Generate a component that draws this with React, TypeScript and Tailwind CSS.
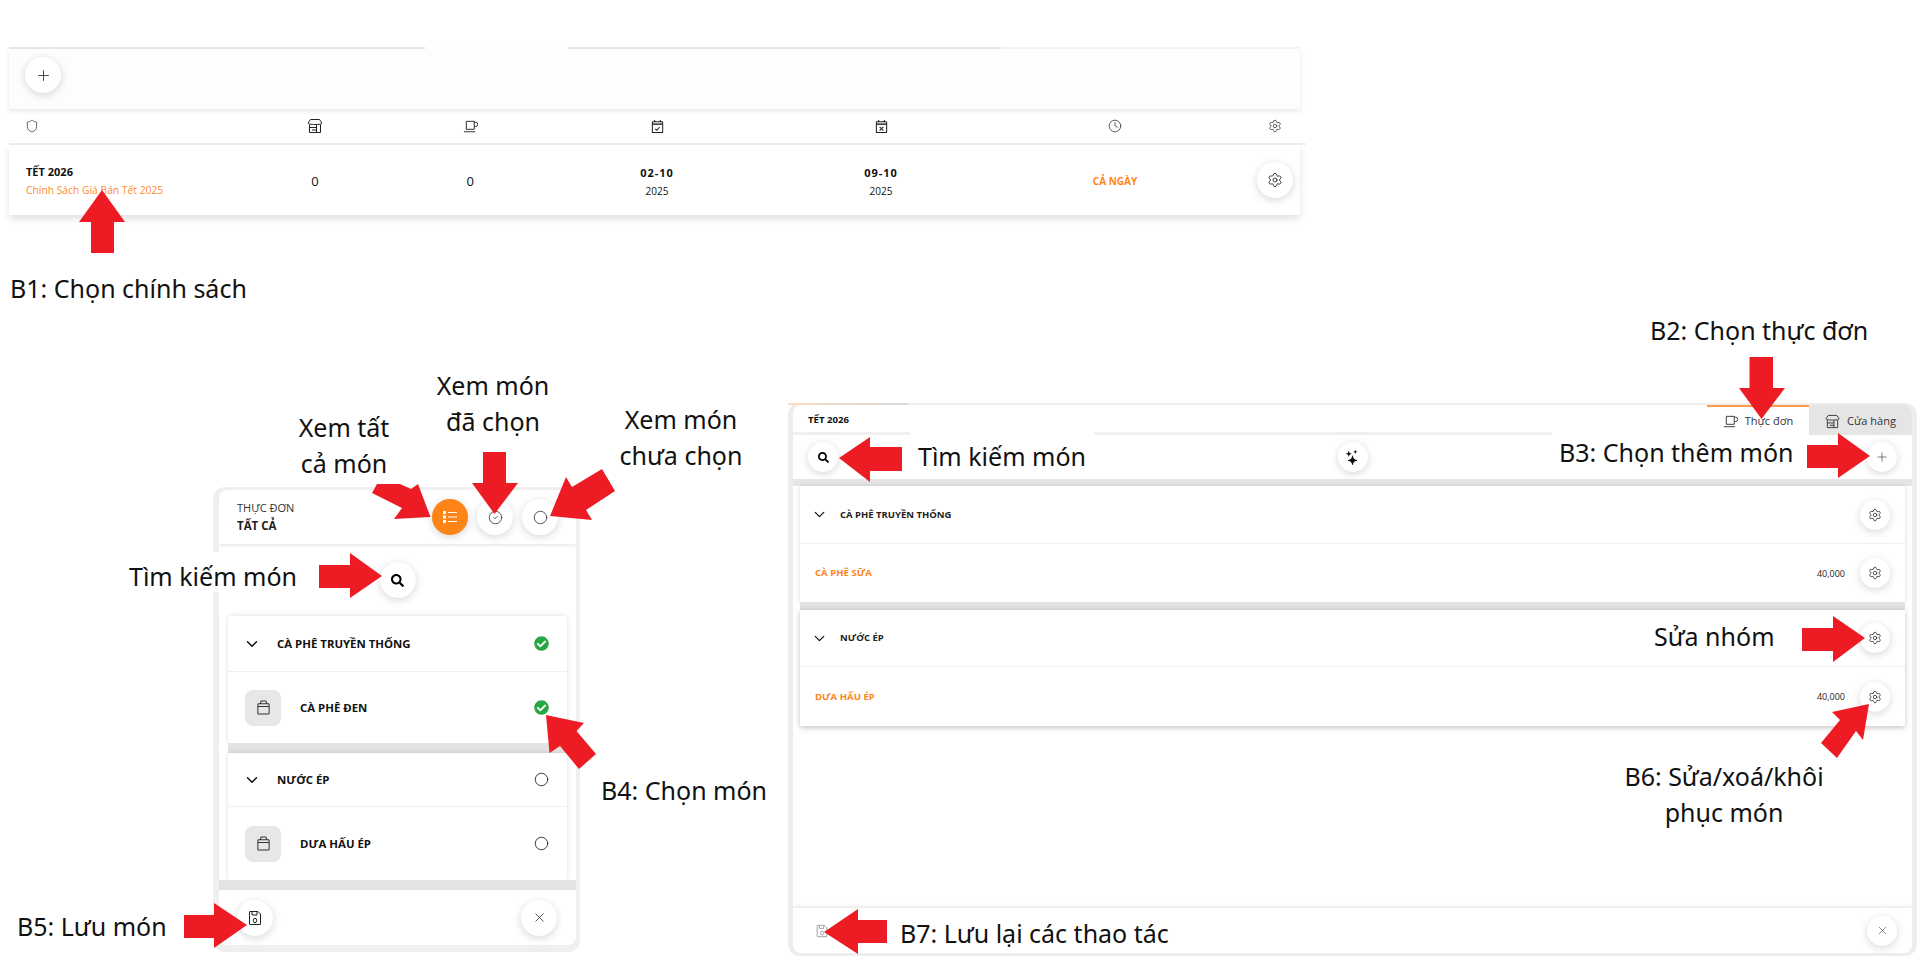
import type { ReactNode } from 'react';
import { ChevronDown, Circle, CircleCheck, Clock, Plus, Settings, Shield, X } from 'lucide-react';
import { BsStars } from 'react-icons/bs';
import { FaCheckCircle, FaSearch } from 'react-icons/fa';

function RoundBtn({ size = 'md', active, children }: { size?: 'sm' | 'md'; active?: boolean; children: ReactNode }) {
  return (
    <div
      className={`flex items-center justify-center rounded-full shadow-[0_2px_8px_rgba(0,0,0,0.16)] ${
        size === 'sm' ? 'h-[30px] w-[30px]' : 'h-[36px] w-[36px]'
      } ${active ? 'bg-[#ff8418] text-white' : 'bg-white text-[#222]'}`}
    >
      {children}
    </div>
  );
}

function StoreIcon({ className }: { className?: string }) {
  return (
    <svg className={className} viewBox="0 0 16 16" fill="none" stroke="currentColor" strokeWidth="1">
      <path d="M3.500 1.500h9l2.500 3.500c0 1-3 1.500-7 1.500S1 6 1 5z" />
      <path d="M2.500 6.500v8h11v-8M2.500 9.500h7M9.500 6.500v8M5 12h4.500" />
    </svg>
  );
}

function CupIcon({ className }: { className?: string }) {
  return (
    <svg className={className} viewBox="0 0 16 16" fill="none" stroke="currentColor" strokeWidth="1">
      <path d="M3.500 2.500h8.500v8.500H3.500zM12 3.500h1.500a1.500 1.500 0 0 1 0 4.500H12" />
      <path d="M1 13.500h12" strokeWidth="1.400" stroke="#666" />
    </svg>
  );
}

function CalendarIcon({ mark }: { mark: 'check' | 'x' }) {
  return (
    <svg className="h-[15px] w-[15px] text-[#222]" viewBox="0 0 16 16" fill="none" stroke="currentColor" strokeWidth="1.100">
      <rect x="2.500" y="3" width="11" height="11.500" rx="0.500" />
      <path d="M2.500 5.500h11" strokeWidth="1.500" />
      <path d="M5 1v2.500M11 1v2.500" />
      {mark === 'check' ? <path d="M5.500 10.500l1.800 1.500 3-3.500" /> : <path d="M6 8.500l4 4M10 8.500l-4 4" />}
    </svg>
  );
}

function ListIcon() {
  return (
    <svg className="h-[16px] w-[16px]" viewBox="0 0 16 16" fill="white">
      <rect x="1" y="2" width="3" height="3" />
      <rect x="1" y="6.500" width="3" height="3" />
      <rect x="1" y="11" width="3" height="3" />
      <rect x="6" y="3" width="9" height="1" />
      <rect x="6" y="7.500" width="9" height="1" />
      <rect x="6" y="12" width="9" height="1" />
    </svg>
  );
}

function SaveIcon({ className }: { className?: string }) {
  return (
    <svg className={className} viewBox="0 0 16 16" fill="none" stroke="currentColor" strokeWidth="1">
      <path d="M3 1.500h8l2.500 2.500v10.500H3a.5.5 0 0 1-.5-.5V2a.5.5 0 0 1 .5-.5z" />
      <path d="M5 1.500v3.500h5V1.500" />
      <ellipse cx="8" cy="10.500" rx="1.700" ry="2.200" />
    </svg>
  );
}

function BoxThumb() {
  return (
    <div className="flex h-[36px] w-[36px] shrink-0 items-center justify-center rounded-lg bg-[#e7e7e7]">
      <svg className="h-[15px] w-[15px] text-[#333]" viewBox="0 0 16 16" fill="none" stroke="currentColor" strokeWidth="1.100">
        <rect x="2" y="4" width="12" height="11" rx="1" />
        <path d="M2 7h12M4.500 4l1-3h5l1 3" />
      </svg>
    </div>
  );
}

function PickGroup({ title, item, picked, itemHeight, titleHeight }: { title: string; item: string; picked?: boolean; itemHeight: string; titleHeight: string }) {
  const mark = picked ? (
    <FaCheckCircle className="h-[15px] w-[15px] text-[#27a844]" />
  ) : (
    <Circle className="h-[15px] w-[15px] text-[#222]" strokeWidth={1.4} />
  );
  return (
    <div className="rounded-[3px] bg-white shadow-[0_0_5px_rgba(0,0,0,0.14)]">
      <div className={`flex items-center justify-between border-b border-[#efefef] pl-[15px] pr-[18px] ${titleHeight}`}>
        <div className="flex items-center gap-[16px]">
          <ChevronDown className="h-[18px] w-[18px] text-[#111]" strokeWidth={2} />
          <span className="text-[11.400px] font-bold text-[#111]">{title}</span>
        </div>
        {mark}
      </div>
      <div className={`flex items-center justify-between pl-[17px] pr-[18px] ${itemHeight}`}>
        <div className="flex items-center gap-[19px]">
          <BoxThumb />
          <span className="text-[11.400px] font-bold text-[#111]">{item}</span>
        </div>
        {mark}
      </div>
    </div>
  );
}

function MenuGroup({ title, item, titleHeight, itemHeight }: { title: string; item: string; titleHeight: string; itemHeight: string }) {
  return (
    <div className="bg-white shadow-[0_0_5px_rgba(0,0,0,0.14)]">
      <div className={`flex items-center justify-between border-b border-[#f0f0f0] pl-[11px] pr-[15px] ${titleHeight}`}>
        <div className="flex items-center gap-[12px]">
          <ChevronDown className="h-[17px] w-[17px] text-[#111]" strokeWidth={1.800} />
          <span className="pt-[1px] text-[9.500px] font-bold text-[#222]">{title}</span>
        </div>
        <RoundBtn size="sm">
          <Settings className="h-[14px] w-[14px]" strokeWidth={1.300} />
        </RoundBtn>
      </div>
      <div className={`flex items-center justify-between pl-[15px] pr-[15px] ${itemHeight}`}>
        <span className="pt-[1px] text-[9.600px] font-bold text-[#ff8418]">{item}</span>
        <div className="flex items-center gap-[15px]">
          <span className="pt-[1px] text-[9px] text-[#222]">40,000</span>
          <RoundBtn size="sm">
            <Settings className="h-[14px] w-[14px]" strokeWidth={1.300} />
          </RoundBtn>
        </div>
      </div>
    </div>
  );
}

function PolicyPanel() {
  const cols = 'grid grid-cols-[228.5px_155px_155.5px_218px_230px_238px_66px] items-center';
  return (
    <div className="absolute left-[9px] top-[47px] w-[1291px] text-[#111]">
      <div className="flex h-[2px]">
        <div className="w-[416px] bg-[#e6e6e6]" />
        <div className="w-[143px] bg-white" />
        <div className="w-[433px] bg-[#e6e6e6]" />
        <div className="flex-1 bg-[#f3f3f3]" />
      </div>
      <div className="flex h-[60px] items-center bg-[#fdfdfd] pb-[8px] pl-[16px] shadow-[0_2px_5px_rgba(0,0,0,0.1)]">
        <RoundBtn>
          <Plus className="h-[17px] w-[17px] text-[#3a2a30]" strokeWidth={1.200} />
        </RoundBtn>
      </div>
      <div className={`${cols} h-[36px] w-[1297px] border-b-2 border-[#eeeeee]`}>
        <div className="pl-[16px]">
          <Shield className="h-[14px] w-[14px] text-[#333]" strokeWidth={1.300} />
        </div>
        <div className="flex justify-center">
          <StoreIcon className="h-[16px] w-[16px] text-[#222]" />
        </div>
        <div className="flex justify-center">
          <CupIcon className="h-[15px] w-[15px] text-[#222]" />
        </div>
        <div className="flex justify-center">
          <CalendarIcon mark="check" />
        </div>
        <div className="flex justify-center">
          <CalendarIcon mark="x" />
        </div>
        <div className="flex justify-center">
          <Clock className="h-[14px] w-[14px] text-[#333]" strokeWidth={1.300} />
        </div>
        <div className="flex justify-end pr-[18px]">
          <Settings className="h-[14px] w-[14px] text-[#333]" strokeWidth={1.300} />
        </div>
      </div>
      <div className={`${cols} h-[70px] bg-white shadow-[0_4px_7px_rgba(0,0,0,0.12)]`}>
        <div className="pl-[17px] pt-[2px]">
          <div className="text-[11px] font-bold leading-[18px]">TẾT 2026</div>
          <div className="text-[10.300px] leading-[18px] text-[#ff8c2e]">Chính Sách Giá Bán Tết 2025</div>
        </div>
        <div className="pt-[3px] text-center text-[13px]">0</div>
        <div className="pt-[3px] text-center text-[13px]">0</div>
        <div className="pt-[3px] text-center">
          <div className="text-[11px] font-bold leading-[18px] tracking-[1px]">02-10</div>
          <div className="text-[10px] leading-[18px]">2025</div>
        </div>
        <div className="pt-[3px] text-center">
          <div className="text-[11px] font-bold leading-[18px] tracking-[1px]">09-10</div>
          <div className="text-[10px] leading-[18px]">2025</div>
        </div>
        <div className="pt-[3px] text-center text-[10px] font-bold text-[#ff8418]">CẢ NGÀY</div>
        <div className="flex justify-end pr-[7px]">
          <RoundBtn>
            <Settings className="h-[16px] w-[16px]" strokeWidth={1.300} />
          </RoundBtn>
        </div>
      </div>
    </div>
  );
}

function PickPanel() {
  return (
    <div className="absolute left-[213px] top-[487px] h-[465px] w-[367px] rounded-xl bg-[#efefef] pb-[7px] pl-[6px] pr-[4px] pt-[3px]">
      <div className="flex h-full flex-col overflow-hidden rounded-lg bg-white">
        <div className="flex h-[54px] shrink-0 items-center justify-between pl-[18px] pr-[18px] shadow-[0_1px_4px_rgba(0,0,0,0.12)]">
          <div>
            <div className="text-[11px] leading-[18px] text-[#333]">THỰC ĐƠN</div>
            <div className="text-[11.500px] font-bold leading-[18px] text-[#222]">TẤT CẢ</div>
          </div>
          <div className="flex gap-[9px]">
            <RoundBtn active>
              <ListIcon />
            </RoundBtn>
            <RoundBtn>
              <CircleCheck className="h-[15px] w-[15px]" strokeWidth={1.200} />
            </RoundBtn>
            <RoundBtn>
              <Circle className="h-[15px] w-[15px]" strokeWidth={1.200} />
            </RoundBtn>
          </div>
        </div>
        <div className="flex h-[72px] shrink-0 items-center justify-center">
          <RoundBtn>
            <FaSearch className="h-[13px] w-[13px] text-black" />
          </RoundBtn>
        </div>
        <div className="flex flex-1 flex-col px-[9px]">
          <PickGroup title="CÀ PHÊ TRUYỀN THỐNG" item="CÀ PHÊ ĐEN" picked titleHeight="h-[56px]" itemHeight="h-[71px]" />
          <div className="h-[10px] bg-[#e3e3e3]" />
          <PickGroup title="NƯỚC ÉP" item="DƯA HẤU ÉP" titleHeight="h-[54px]" itemHeight="h-[73px]" />
        </div>
        <div className="flex h-[65px] shrink-0 items-center justify-between border-t-[10px] border-[#e3e3e3] pl-[18px] pr-[19px]">
          <RoundBtn>
            <SaveIcon className="h-[16px] w-[16px] text-[#222]" />
          </RoundBtn>
          <RoundBtn>
            <X className="h-[15px] w-[15px]" strokeWidth={1.200} />
          </RoundBtn>
        </div>
      </div>
    </div>
  );
}

function MenuPanel() {
  return (
    <div className="absolute left-[788px] top-[403px] h-[553px] w-[1129px] rounded-xl bg-[#ededed] pb-[3px] pl-[5px] pr-[5px] pt-[2px]">
      <div className="absolute left-0 top-0 h-[2px] w-[120px] bg-gradient-to-r from-[#fbdcc0] to-[#d8d8d8]" />
      <div className="flex h-full flex-col overflow-hidden rounded-lg bg-white">
        <div className="flex h-[30px] shrink-0 items-center justify-between border-b-[3px] border-[#efefef] pl-[15px]">
          <span className="pt-[4px] text-[9.600px] font-bold text-[#111]">TẾT 2026</span>
          <div className="flex h-[30px] self-start">
            <div className="flex w-[102px] items-center justify-center gap-[7px] border-t-2 border-[#ff9a4a] bg-white pt-[1px] text-[11px] text-[#333]">
              <CupIcon className="h-[15px] w-[15px]" />
              Thực đơn
            </div>
            <div className="flex w-[103px] items-center justify-center gap-[7px] bg-[#e5e5e5] pt-[2px] text-[11px] text-[#333]">
              <StoreIcon className="h-[15px] w-[15px]" />
              Cửa hàng
            </div>
          </div>
        </div>
        <div className="flex h-[44px] shrink-0 items-center justify-between px-[15px]">
          <RoundBtn size="sm">
            <FaSearch className="h-[11px] w-[11px] text-black" />
          </RoundBtn>
          <RoundBtn size="sm">
            <BsStars className="h-[15px] w-[15px] text-[#111]" />
          </RoundBtn>
          <RoundBtn size="sm">
            <Plus className="h-[14px] w-[14px]" strokeWidth={1} />
          </RoundBtn>
        </div>
        <div className="flex flex-1 flex-col border-t-[7px] border-[#e6e6e6] px-[7px]">
          <MenuGroup title="CÀ PHÊ TRUYỀN THỐNG" item="CÀ PHÊ SỮA" titleHeight="h-[58px]" itemHeight="h-[58px]" />
          <div className="h-[8px] bg-[#e2e2e2]" />
          <div className="shadow-[0_3px_5px_rgba(0,0,0,0.12)]">
            <MenuGroup title="NƯỚC ÉP" item="DƯA HẤU ÉP" titleHeight="h-[57px]" itemHeight="h-[59px]" />
          </div>
        </div>
        <div className="flex h-[45px] shrink-0 items-center justify-between pl-[22px] pr-[15px] shadow-[0_-1px_4px_rgba(0,0,0,0.12)]">
          <SaveIcon className="h-[14px] w-[14px] text-[#999]" />
          <RoundBtn size="sm">
            <X className="h-[13px] w-[13px]" strokeWidth={1} />
          </RoundBtn>
        </div>
      </div>
    </div>
  );
}

function Arrows() {
  const shapes = [
    '102,190 125,222 114,222 114,253 91,253 91,222 79,222',
    '377,484 400,484 411,489 418,484 430.5,517 394,519 402,508 372,493',
    '483,452 506,452 506,483 518,483 494.5,514 472,483 483,483',
    '550,516 566,477 572,487 602,469 615,491 586,510 592,520',
    '319,565 350,565 350,553 382,576 350,598 350,588 319,588',
    '546,715 584,723 576.5,731 596,754 579,769 560,746 549.5,753',
    '184,915 214,915 214,903 247,925 214,948 214,938 184,938',
    '1749.5,357 1773,357 1773,388 1785,388 1761.5,419 1739,388 1749.5,388',
    '1807,445 1838,445 1838,433 1870,456 1838,478 1838,468 1807,468',
    '1802,628 1833,628 1833,616 1865,638 1833,662 1833,651 1802,651',
    '1869,704 1863,740 1856,731 1837,758 1821,743 1840,720 1832,712',
    '839,458 870,437 870,447 902,447 902,471 870,471 870,482',
    '824,932 858,909 858,920 887,920 887,943 858,943 858,954',
  ];
  return (
    <svg className="pointer-events-none absolute left-0 top-0 h-[961px] w-[1920px]" viewBox="0 0 1920 961">
      {shapes.map((points) => (
        <polygon key={points} points={points} fill="#ed1c24" />
      ))}
    </svg>
  );
}

export default function App() {
  const label = "absolute whitespace-nowrap text-[25px] leading-[36px] text-[#111]";
  return (
    <div className="relative h-[961px] w-[1920px] overflow-hidden bg-white font-['Open_Sans',sans-serif]">
      <PolicyPanel />
      <PickPanel />
      <MenuPanel />

      <div className="font-['Noto_Sans',sans-serif]">
        <div className={`${label} left-[10px] top-[270px]`}>B1: Chọn chính sách</div>
        <div className={`${label} left-[284px] top-[409px] w-[120px] text-center`}>Xem tất<br />cả món</div>
        <div className={`${label} left-[423px] top-[367px] w-[140px] text-center`}>Xem món<br />đã chọn</div>
        <div className={`${label} left-[611px] top-[401px] w-[140px] text-center`}>Xem món<br />chưa chọn</div>
        <div className={`${label} left-[125px] top-[552px] h-[40px] w-[185px] bg-white pl-[4px] pt-[6px]`}>Tìm kiếm món</div>
        <div className={`${label} left-[601px] top-[772px]`}>B4: Chọn món</div>
        <div className={`${label} left-[17px] top-[908px]`}>B5: Lưu món</div>
        <div className={`${label} left-[1650px] top-[312px]`}>B2: Chọn thực đơn</div>
        <div className={`${label} left-[910px] top-[432px] h-[44px] w-[184px] bg-white pl-[8px] pt-[6px]`}>Tìm kiếm món</div>
        <div className={`${label} left-[1552px] top-[428px] h-[49px] w-[257px] bg-white pl-[7px] pt-[6px]`}>B3: Chọn thêm món</div>
        <div className={`${label} left-[1654px] top-[618px]`}>Sửa nhóm</div>
        <div className={`${label} left-[1624px] top-[758px] w-[200px] text-center`}>B6: Sửa/xoá/khôi<br />phục món</div>
        <div className={`${label} left-[887px] top-[909px] h-[43px] w-[294px] bg-white pl-[13px] pt-[6px]`}>B7: Lưu lại các thao tác</div>
      </div>

      <Arrows />
    </div>
  );
}
